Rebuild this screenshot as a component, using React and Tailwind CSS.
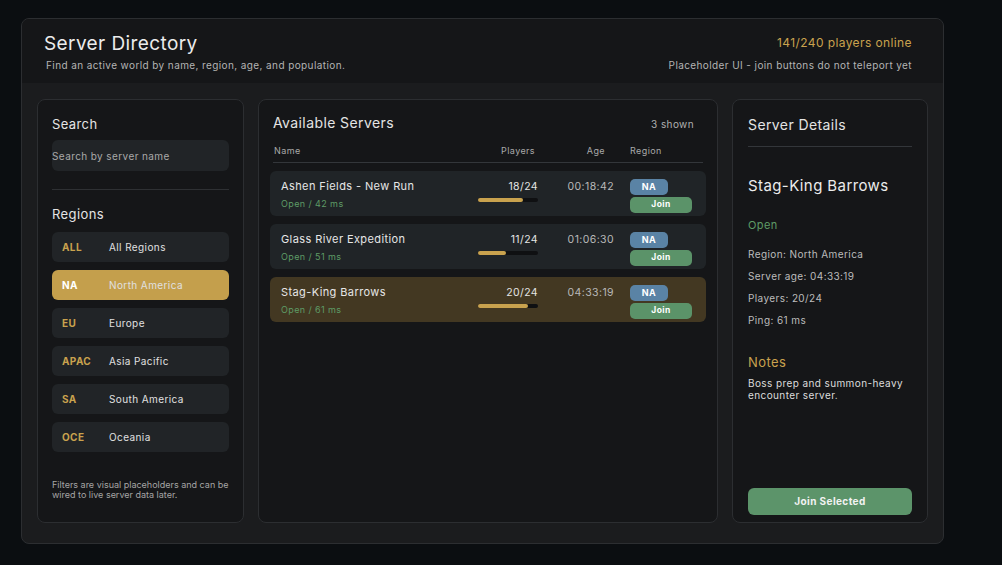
import React, { useState } from "react";

const regions = [
  { code: "ALL", name: "All Regions" },
  { code: "NA", name: "North America" },
  { code: "EU", name: "Europe" },
  { code: "APAC", name: "Asia Pacific" },
  { code: "SA", name: "South America" },
  { code: "OCE", name: "Oceania" },
];

const servers = [
  { name: "Ashen Fields - New Run", ping: 42, players: 18, age: "00:18:42", region: "NA" },
  { name: "Glass River Expedition", ping: 51, players: 11, age: "01:06:30", region: "NA" },
  { name: "Stag-King Barrows", ping: 61, players: 20, age: "04:33:19", region: "NA" },
];

const App = () => {
  const [region, setRegion] = useState("NA");
  const [selected, setSelected] = useState(2);
  const current = servers[selected];

  return (
    <div
      className="w-full h-[565px] bg-[#0b0e11] pt-[18px] pl-[21px] text-[#e4e4e4] tracking-[0.025em]"
      style={{ fontFamily: "Inter, 'Noto Sans', sans-serif" }}
    >
      <div className="w-[923px] h-[526px] flex flex-col rounded-lg border border-[#2c2e31] bg-[#1b1c1e] overflow-hidden">
        {/* Header */}
        <div className="h-[64px] shrink-0 bg-[#151618] flex justify-between pl-[22px] pr-[31px]">
          <div className="pt-[13px]">
            <h1 className="text-[19px] leading-6 text-[#ececec]">Server Directory</h1>
            <p className="mt-[2px] text-[10px] text-[#b4b4b4] pl-[2px]">
              Find an active world by name, region, age, and population.
            </p>
          </div>
          <div className="pt-[16px] text-right">
            <div className="text-[12px] leading-4 text-[#c9a24e]">141/240 players online</div>
            <div className="mt-[7px] text-[10px] text-[#b4b4b4]">
              Placeholder UI - join buttons do not teleport yet
            </div>
          </div>
        </div>

        {/* Body */}
        <div className="flex-1 flex gap-[14px] pt-4 pb-[20px] px-[15px]">
          {/* Left - filters */}
          <div className="w-[207px] shrink-0 flex flex-col rounded-lg border border-[#2c2e31] bg-[#151618] px-[14px] pt-[16px] pb-[22px]">
            <div className="text-[13px] leading-4">Search</div>
            <input
              placeholder="Search by server name"
              className="mt-[8px] h-[31px] w-full rounded-md bg-[#212427] text-[10px] text-[#ddd] placeholder-[#a9a9a9] outline-none"
            />
            <div className="mt-[18px] h-px bg-[#2e3033]" />
            <div className="mt-[16px] text-[13px] leading-4">Regions</div>
            <div className="mt-[10px] flex flex-col gap-2">
              {regions.map((r) => {
                const active = r.code === region;
                return (
                  <button
                    key={r.code}
                    onClick={() => setRegion(r.code)}
                    className={`h-[30px] flex items-center rounded-md px-[10px] text-left ${
                      active ? "bg-[#c49f4c]" : "bg-[#212427]"
                    }`}
                  >
                    <span
                      className={`w-[47px] text-[10px] font-bold ${
                        active ? "text-white" : "text-[#c9a24e]"
                      }`}
                    >
                      {r.code}
                    </span>
                    <span className="text-[10px] text-[#e0e0e0]">{r.name}</span>
                  </button>
                );
              })}
            </div>
            <p className="mt-auto whitespace-nowrap text-[9px] leading-[10px] tracking-normal text-[#a5a5a5]">
              Filters are visual placeholders and can be
              <br />
              wired to live server data later.
            </p>
          </div>

          {/* Middle - server list */}
          <div className="flex-1 rounded-lg border border-[#2c2e31] bg-[#151618] pt-[13px]">
            <div className="flex items-center justify-between px-[14px]">
              <h2 className="text-[14px] leading-5">Available Servers</h2>
              <span className="pr-[9px] pt-[2px] text-[10px] text-[#b0b0b0]">3 shown</span>
            </div>
            <div className="mx-[14px] mt-[11px] flex border-b border-[#33363a] pb-[4px] text-[9px] text-[#a9a9a9]">
              <span className="flex-1 pl-[1px]">Name</span>
              <span className="w-[60px] text-right">Players</span>
              <span className="w-[70px] text-right">Age</span>
              <span className="ml-[25px] w-[73px]">Region</span>
            </div>
            <div className="mt-2 flex flex-col gap-2 px-[11px]">
              {servers.map((s, i) => {
                const active = i === selected;
                return (
                  <div
                    key={s.name}
                    onClick={() => setSelected(i)}
                    className={`h-[45px] flex items-start rounded-md pl-[11px] pr-[14px] ${
                      active ? "bg-[#433822]" : "bg-[#202427]"
                    }`}
                  >
                    <div className="flex-1 pt-[7px]">
                      <div className="text-[11px] leading-4 text-[#e6e6e6]">{s.name}</div>
                      <div className="mt-[4px] text-[9px] leading-3 text-[#5e9c66]">Open / {s.ping} ms</div>
                    </div>
                    <div className="w-[60px] flex flex-col items-end pt-[8px]">
                      <span className="text-[10.5px] leading-4">{s.players}/24</span>
                      <div className="mt-[3px] h-[4px] w-[60px] rounded-full bg-[#0f1012]">
                        <div
                          className="h-full rounded-full bg-[#c9a24e]"
                          style={{ width: `${(s.players / 24) * 100}%` }}
                        />
                      </div>
                    </div>
                    <div className="w-[76px] pt-[8px] text-right text-[10.5px] leading-4 text-[#b9b9b9]">
                      {s.age}
                    </div>
                    <div className="ml-4 w-[62px] flex flex-col gap-[2px] pt-[8px]">
                      <span className="h-[16px] w-[38px] flex items-center justify-center rounded-[5px] bg-[#5a83a5] text-[9px] font-bold text-white">
                        {s.region}
                      </span>
                      <button className="h-[16px] w-[62px] rounded-[5px] bg-[#5b9369] text-[8.5px] font-bold text-white">
                        Join
                      </button>
                    </div>
                  </div>
                );
              })}
            </div>
          </div>

          {/* Right - details */}
          <div className="w-[196px] shrink-0 flex flex-col rounded-lg border border-[#2c2e31] bg-[#151618] px-[15px] pt-[15px] pb-[7px]">
            <h2 className="text-[14px] leading-5">Server Details</h2>
            <div className="mt-[11px] h-px bg-[#33363a]" />
            <div className="mt-[29px] text-[15px] leading-5 text-[#ececec]">{current.name}</div>
            <div className="mt-[21px] text-[11px] text-[#5e9c66]">Open</div>
            <div className="mt-[13px] flex flex-col gap-[8px] text-[10px] leading-[14px] text-[#bcbcbc]">
              <span>Region: North America</span>
              <span>Server age: {current.age}</span>
              <span>Players: {current.players}/24</span>
              <span>Ping: {current.ping} ms</span>
            </div>
            <div className="mt-[27px] text-[13px] leading-4 text-[#c9a24e]">Notes</div>
            <p className="mt-[7px] text-[10px] leading-[12px] text-[#dcdcdc]">
              Boss prep and summon-heavy encounter server.
            </p>
            <button className="mt-auto h-[27px] w-full rounded-md bg-[#5c946a] text-[10px] font-bold text-[#f2f2f2]">
              Join Selected
            </button>
          </div>
        </div>
      </div>
    </div>
  );
};

export default App;
